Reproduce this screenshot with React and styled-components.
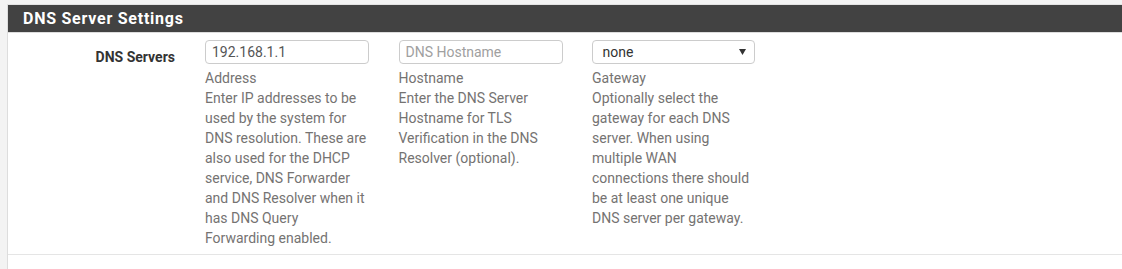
import React from 'react';
import styled, { createGlobalStyle } from 'styled-components';

const GlobalStyle = createGlobalStyle`
  html, body {
    margin: 0;
    padding: 0;
    background: #f3f3f3;
    font-family: Roboto, "Liberation Sans", Arial, sans-serif;
  }
`;

const Page = styled.div`
  padding: 4px 0 0 7px;
  height: 265px;
  overflow: hidden;
`;

const Panel = styled.div`
  background: #ffffff;
  border-top: 1px solid #e3e3e3;
  border-left: 1px solid #dddddd;
  height: 100%;
`;

const PanelHeading = styled.h2`
  margin: 0;
  height: 27px;
  padding: 0 15px;
  display: flex;
  align-items: center;
  background: #424242;
  border-bottom: 1px solid #dddddd;
  color: #ffffff;
  font-size: 16px;
  font-weight: 700;
  letter-spacing: 0.75px;
`;

const FormRow = styled.div`
  display: flex;
  padding: 7px 0 6px;
  border-bottom: 1px solid #e5e5e5;
`;

const Label = styled.label`
  width: 167px;
  padding: 7px 15px 0 0;
  text-align: right;
  font-size: 14px;
  line-height: 20px;
  font-weight: 700;
  color: #333333;
`;

const Column = styled.div`
  width: 163.5px;
  padding: 0 15px;
`;

const TextInput = styled.input`
  box-sizing: border-box;
  display: block;
  width: 164px;
  height: 24px;
  padding: 0 6px;
  border: 1px solid #cccccc;
  border-radius: 4px;
  font-family: inherit;
  font-size: 14px;
  color: #555555;
  outline: none;
  &::placeholder {
    color: #a0a0a0;
  }
`;

const SelectWrap = styled.div`
  position: relative;
  width: 163px;
`;

const Select = styled.select`
  box-sizing: border-box;
  display: block;
  width: 163px;
  height: 24px;
  padding: 0 6px;
  border: 1px solid #cccccc;
  border-radius: 4px;
  background: #ffffff;
  appearance: none;
  font-family: inherit;
  font-size: 14px;
  color: #333333;
  outline: none;
`;

const Caret = styled.svg`
  position: absolute;
  right: 9px;
  top: 9px;
  pointer-events: none;
`;

const Help = styled.div`
  margin-top: 4px;
  font-size: 14px;
  line-height: 20px;
  color: #757372;
`;

const fields = [
  {
    key: 'addr',
    title: 'Address',
    text: 'Enter IP addresses to be used by the system for DNS resolution. These are also used for the DHCP service, DNS Forwarder and DNS Resolver when it has DNS Query Forwarding enabled.',
  },
  {
    key: 'host',
    title: 'Hostname',
    text: 'Enter the DNS Server Hostname for TLS Verification in the DNS Resolver (optional).',
  },
  {
    key: 'gw',
    title: 'Gateway',
    text: 'Optionally select the gateway for each DNS server. When using multiple WAN connections there should be at least one unique DNS server per gateway.',
  },
];

function Control({ kind }) {
  if (kind === 'addr') return <TextInput defaultValue="192.168.1.1" />;
  if (kind === 'host') return <TextInput placeholder="DNS Hostname" />;
  return (
    <SelectWrap>
      <Select defaultValue="none">
        <option value="none">&nbsp;none</option>
      </Select>
      <Caret width="7" height="6" viewBox="0 0 7 6">
        <path d="M0 0 H7 L3.5 6 Z" fill="#333" />
      </Caret>
    </SelectWrap>
  );
}

export default function App() {
  return (
    <>
      <GlobalStyle />
      <Page>
        <Panel>
          <PanelHeading>DNS Server Settings</PanelHeading>
          <FormRow>
            <Label>DNS Servers</Label>
            {fields.map((f) => (
              <Column key={f.key}>
                <Control kind={f.key} />
                <Help>
                  {f.title}
                  <br />
                  {f.text}
                </Help>
              </Column>
            ))}
          </FormRow>
        </Panel>
      </Page>
    </>
  );
}
